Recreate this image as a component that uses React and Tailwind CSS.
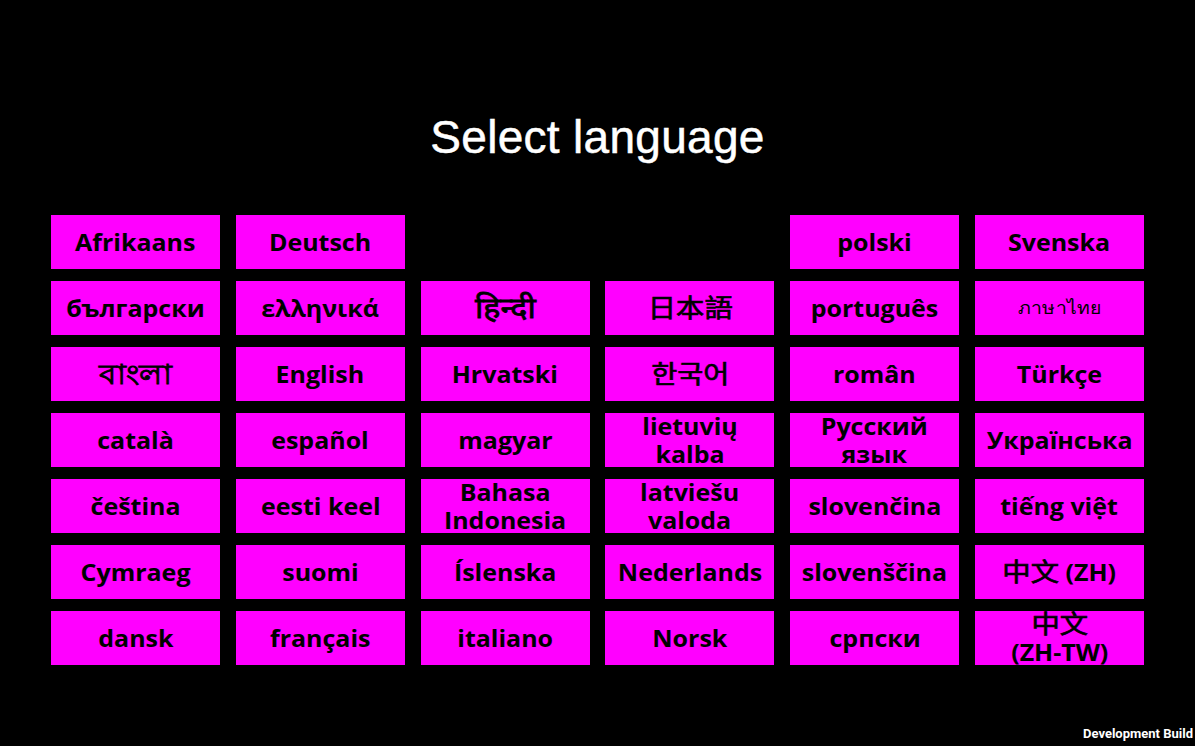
const cjk = "text-[25.5px] font-normal [-webkit-text-stroke:0.7px_black]";
const rows = [
  ["Afrikaans", "Deutsch", null, null, "polski", "Svenska"],
  [
    "български",
    "ελληνικά",
    { t: "हिन्दी", c: "text-[29px] font-normal [-webkit-text-stroke:0.8px_black]" },
    { t: "日本語", c: cjk },
    "português",
    { t: "ภาษาไทย", c: "text-[17.5px] font-normal" },
  ],
  [
    { t: "বাংলা", c: "text-[28px] font-normal [-webkit-text-stroke:0.9px_black]" },
    "English",
    "Hrvatski",
    { t: "한국어", c: cjk },
    "român",
    "Türkçe",
  ],
  ["català", "español", "magyar", "lietuvių\nkalba", "Русский\nязык", "Українська"],
  ["čeština", "eesti keel", "Bahasa\nIndonesia", "latviešu\nvaloda", "slovenčina", "tiếng việt"],
  [
    "Cymraeg",
    "suomi",
    "Íslenska",
    "Nederlands",
    "slovenščina",
    { parts: ["中文", " (ZH)"] },
  ],
  ["dansk", "français", "italiano", "Norsk", "српски", { parts: ["中文", "\n(ZH-TW)"], clip: true }],
];

function Label({ item }) {
  if (typeof item === "string")
    return <span className="block translate-y-[0.5px] scale-x-[1.11] whitespace-pre-line">{item}</span>;
  if (item.parts)
    return (
      <span className="block scale-x-[1.11] whitespace-pre-line">
        <span className={cjk}>{item.parts[0]}</span>
        {item.parts[1]}
      </span>
    );
  return <span className={`block -translate-y-px scale-x-[1.11] whitespace-nowrap ${item.c}`}>{item.t}</span>;
}

export default function App() {
  return (
    <div className="relative w-[1195px] h-[746px] overflow-hidden bg-black font-['Open_Sans','Noto_Sans','Noto_Sans_CJK_SC',sans-serif]">
      <h1 className="pt-[109px] h-[215px] text-center text-[46px] leading-[56px] tracking-[0.3px] text-white font-['Liberation_Sans',sans-serif] [-webkit-text-stroke:0.5px_white]">
        Select language
      </h1>
      <div className="grid grid-cols-6 gap-x-[15.6px] gap-y-[12px] ml-[51px] w-[1093px]">
        {rows.flat().map((item, i) =>
          item ? (
            <div
              key={i}
              className={`flex h-[54px] items-center justify-center bg-[#ff00ff] text-center text-[22.5px] leading-[28px] font-bold text-black ${
                item.clip ? "overflow-hidden" : ""
              }`}
            >
              <Label item={item} />
            </div>
          ) : (
            <div key={i} />
          )
        )}
      </div>
      <div className="absolute right-[2px] bottom-[4px] text-[13px] leading-[16px] font-bold text-white font-['Roboto',sans-serif]">
        Development Build
      </div>
    </div>
  );
}
